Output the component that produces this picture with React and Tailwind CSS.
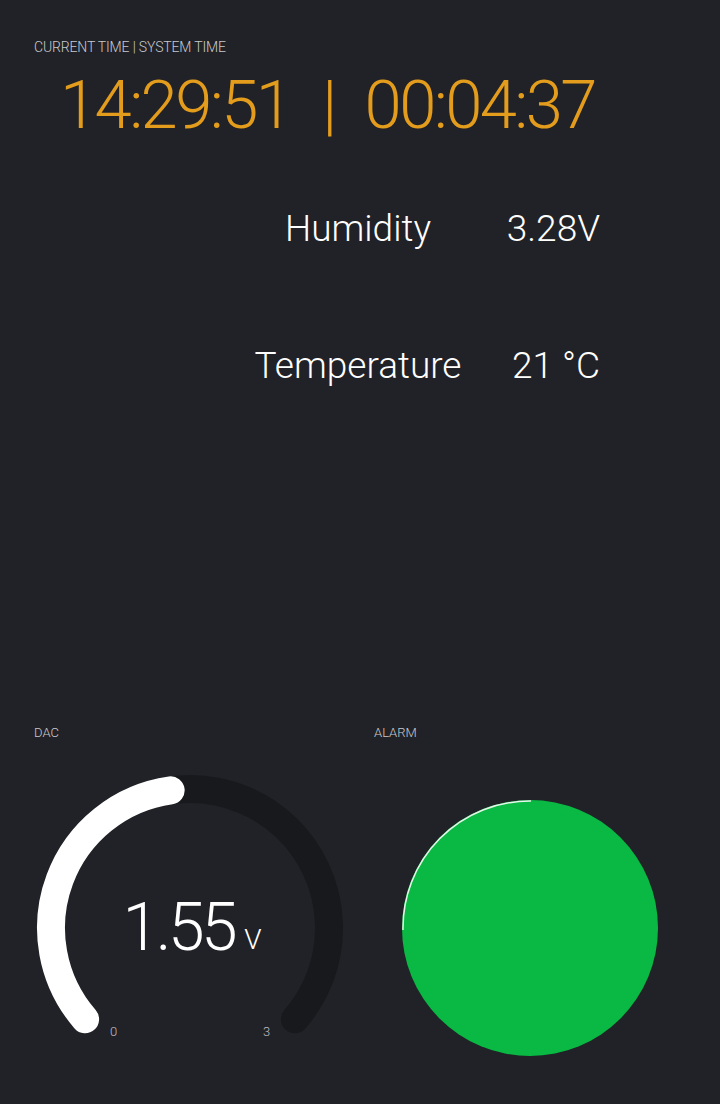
import React from "react";

const font = { fontFamily: "Roboto, 'Liberation Sans', sans-serif" };

function Gauge({ value, min, max, unit }) {
  const cx = 160;
  const cy = 160;
  const r = 139;
  const pt = (deg) => {
    const a = (deg * Math.PI) / 180;
    return [cx + r * Math.sin(a), cy - r * Math.cos(a)];
  };
  const [sx, sy] = pt(-131);
  const [ex, ey] = pt(131);
  const [vx, vy] = pt(-8);

  return (
    <div className="relative w-[320px] h-[320px] mx-auto">
      <svg width="320" height="320" viewBox="0 0 320 320">
        <path
          d={`M ${sx} ${sy} A ${r} ${r} 0 1 1 ${ex} ${ey}`}
          fill="none"
          stroke="#18191d"
          strokeWidth="28"
          strokeLinecap="round"
        />
        <path
          d={`M ${sx} ${sy} A ${r} ${r} 0 0 1 ${vx} ${vy}`}
          fill="none"
          stroke="#ffffff"
          strokeWidth="28"
          strokeLinecap="round"
        />
      </svg>
      <div className="absolute inset-0 flex items-center justify-center pl-[4px]">
        <span className="text-white font-light text-[66px] leading-none tracking-[-3.5px]">{value}</span>
        <span className="text-white font-light text-[28px] leading-none mt-[24px] ml-[10px]">{unit}</span>
      </div>
      <span className="absolute left-[80px] top-[254px] text-[13px] text-[#bdbec2] font-light">{min}</span>
      <span className="absolute left-[233px] top-[254px] text-[13px] text-[#bdbec2] font-light">{max}</span>
    </div>
  );
}

function Led() {
  return (
    <div className="relative w-[258px] h-[258px] mx-auto">
      <svg width="258" height="258" viewBox="0 0 258 258">
        <circle cx="129" cy="129" r="128" fill="#09b943" />
        <path d="M 2 131 A 127 127 0 0 1 130 2" fill="none" stroke="#e8f5ea" strokeWidth="1.5" />
      </svg>
    </div>
  );
}

export default function App() {
  return (
    <div className="w-[720px] h-[1104px] bg-[#212227] overflow-hidden" style={font}>
      <div className="pt-[40px] pl-[34px] text-[14px] leading-[14px] text-[#c9cacd] font-light tracking-[-0.15px]">
        CURRENT TIME | SYSTEM TIME
      </div>
      <div className="mt-[21px] pl-[60px] flex items-center text-[67px] leading-[60px] text-[#e39c1b] font-light tracking-[-2.6px] whitespace-nowrap">
        <span>14:29:51</span>
        <span className="ml-[32px]">|</span>
        <span className="ml-[30px]">00:04:37</span>
      </div>

      <div className="mt-[74px] grid grid-cols-[238px_240px_122px] items-center text-white text-[37px] font-light leading-[40px]">
        <div />
        <div className="text-center">Humidity</div>
        <div className="text-right">3.28V</div>
      </div>
      <div className="mt-[97px] grid grid-cols-[238px_240px_122px] items-center text-white text-[37px] font-light leading-[40px]">
        <div />
        <div className="text-center">Temperature</div>
        <div className="text-right">21 °C</div>
      </div>

      <div className="mt-[340px] px-[20px] grid grid-cols-2">
        <div>
          <div className="pl-[14px] text-[13px] leading-[14px] text-[#c9cacd] font-light">DAC</div>
          <div className="mt-[28px]">
            <Gauge value="1.55" unit="V" min="0" max="3" />
          </div>
        </div>
        <div>
          <div className="pl-[14px] text-[13px] leading-[14px] text-[#c9cacd] font-light">ALARM</div>
          <div className="mt-[59px]">
            <Led />
          </div>
        </div>
      </div>
    </div>
  );
}
